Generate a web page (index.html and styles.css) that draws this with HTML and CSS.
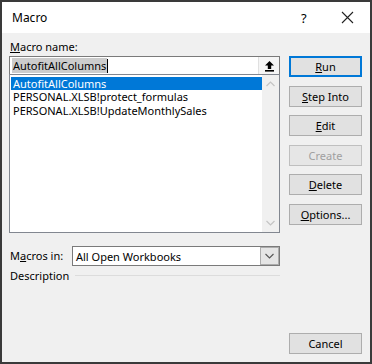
FILE: index.html
```html
<!DOCTYPE html>
<html lang="en">
<head>
    <meta charset="UTF-8">
    <title>Macro</title>
    <link rel="stylesheet" href="styles.css">
</head>
<body>
    <div class="window">
        <div class="titlebar">
            <span class="title">Macro</span>
            <span class="help">?</span>
            <span class="close">
                <svg width="13" height="13" viewBox="0 0 13 13"><path d="M1 1 L12 12 M12 1 L1 12" stroke="#222" stroke-width="1.1" fill="none"/></svg>
            </span>
        </div>

        <div class="content">
            <div class="left">
                <div class="label"><u>M</u>acro name:</div>
                <div class="name-input">
                    <span class="name-text"><span class="sel">AutofitAllColumns</span><span class="caret"></span></span>
                    <span class="upload">
                        <svg width="11" height="12" viewBox="0 0 11 12"><path d="M5.5 1 L1 5.5 H3.8 V9 H7.2 V5.5 H10 Z" fill="#000"/><rect x="1" y="10" width="9" height="1.6" fill="#000"/></svg>
                    </span>
                </div>
                <div class="listbox">
                    <ul class="items">
                        <li class="selected">AutofitAllColumns</li>
                        <li>PERSONAL.XLSB!protect_formulas</li>
                        <li>PERSONAL.XLSB!UpdateMonthlySales</li>
                    </ul>
                    <div class="scrollbar">
                        <svg width="9" height="6" viewBox="0 0 9 6"><path d="M0.5 5 L4.5 1 L8.5 5" stroke="#c4c4c4" stroke-width="1.2" fill="none"/></svg>
                        <svg width="9" height="6" viewBox="0 0 9 6"><path d="M0.5 1 L4.5 5 L8.5 1" stroke="#c4c4c4" stroke-width="1.2" fill="none"/></svg>
                    </div>
                </div>
                <div class="macros-in">
                    <span class="label">M<u>a</u>cros in:</span>
                    <div class="select">
                        <span class="select-text">All Open Workbooks</span>
                        <span class="dropdown">
                            <svg width="9" height="6" viewBox="0 0 9 6"><path d="M0.5 1 L4.5 5 L8.5 1" stroke="#555" stroke-width="1.1" fill="none"/></svg>
                        </span>
                    </div>
                </div>
                <div class="description">
                    <span>Description</span>
                    <span class="rule"></span>
                </div>
            </div>

            <div class="buttons">
                <button class="btn default"><u>R</u>un</button>
                <button class="btn"><u>S</u>tep Into</button>
                <button class="btn"><u>E</u>dit</button>
                <button class="btn disabled">Create</button>
                <button class="btn"><u>D</u>elete</button>
                <button class="btn"><u>O</u>ptions...</button>
                <button class="btn cancel">Cancel</button>
            </div>
        </div>
    </div>
</body>
</html>
```

FILE: styles.css
```css
body {
    margin: 0;
    padding: 0;
    font-family: "Noto Sans", "Open Sans", sans-serif;
    font-size: 11px;
    color: #000;
    background-color: #fff;
}

.window {
    width: 372px;
    height: 364px;
    box-sizing: border-box;
    border: 2px solid #3a3a3a;
    background-color: #f0f0f0;
    display: flex;
    flex-direction: column;
}

.titlebar {
    height: 31px;
    background-color: #fff;
    display: flex;
    align-items: center;
    padding-left: 10px;
}

.title {
    flex: 1;
    font-size: 12px;
}

.help {
    width: 12px;
    margin-right: 28px;
    font-size: 13px;
}

.close {
    display: flex;
    margin-right: 16px;
}

.content {
    flex: 1;
    display: flex;
    padding: 6px 7px 8px 7px;
}

.left {
    width: 271px;
    display: flex;
    flex-direction: column;
}

.label {
    height: 16px;
    line-height: 16px;
    margin-left: 1px;
}

.name-input {
    height: 18px;
    box-sizing: border-box;
    border: 1px solid #7a7a7a;
    border-bottom: none;
    background-color: #fff;
    display: flex;
    align-items: center;
    margin-top: 1px;
}

.name-text {
    flex: 1;
    padding-left: 2px;
    display: flex;
    align-items: center;
}

.sel {
    background-color: #cccccc;
    line-height: 15px;
    padding: 0 1px;
}

.caret {
    width: 1px;
    height: 14px;
    background-color: #000;
}

.upload {
    width: 20px;
    height: 17px;
    display: flex;
    align-items: center;
    justify-content: center;
    background-color: #f5f5f5;
    border-left: 1px solid #e0e0e0;
}

.listbox {
    height: 159px;
    box-sizing: border-box;
    border: 1px solid #828790;
    background-color: #fff;
    display: flex;
}

.items {
    list-style-type: none;
    margin: 0;
    padding: 2px 0 0 1px;
    flex: 1;
}

.items li {
    height: 13.3px;
    line-height: 13.3px;
    padding-left: 2px;
    white-space: nowrap;
}

.items li.selected {
    background-color: #0078d7;
    color: #fff;
}

.scrollbar {
    width: 17px;
    background-color: #f0f0f0;
    display: flex;
    flex-direction: column;
    justify-content: space-between;
    align-items: center;
    padding: 6px 0 6px 0;
}

.macros-in {
    display: flex;
    align-items: center;
    margin-top: 13px;
}

.macros-in .label {
    width: 62px;
}

.select {
    flex: 1;
    height: 20px;
    box-sizing: border-box;
    border: 1px solid #7a7a7a;
    background-color: #fff;
    display: flex;
    align-items: center;
}

.select-text {
    flex: 1;
    padding-left: 3px;
}

.dropdown {
    width: 19px;
    height: 18px;
    box-sizing: border-box;
    background-color: #e5e5e5;
    border: 1px solid #acacac;
    display: flex;
    align-items: center;
    justify-content: center;
}

.description {
    display: flex;
    align-items: center;
    margin-top: 1px;
    height: 16px;
    margin-left: 1px;
}

.rule {
    flex: 1;
    height: 1px;
    background-color: #dcdcdc;
    margin-left: 6px;
}

.buttons {
    width: 73px;
    margin-left: 9px;
    padding-top: 17px;
    display: flex;
    flex-direction: column;
    gap: 8.6px;
}

.btn {
    width: 73px;
    height: 21px;
    box-sizing: border-box;
    font-family: "Noto Sans", "Open Sans", sans-serif;
    font-size: 11px;
    color: #000;
    background-color: #e1e1e1;
    border: 1px solid #adadad;
    padding: 0;
    line-height: 17px;
}

.btn.default {
    border: 2px solid #0078d7;
}

.btn.disabled {
    color: #a0a0a0;
    border-color: #bfbfbf;
    background-color: #e6e6e6;
}

.btn.cancel {
    margin-top: auto;
}
```
